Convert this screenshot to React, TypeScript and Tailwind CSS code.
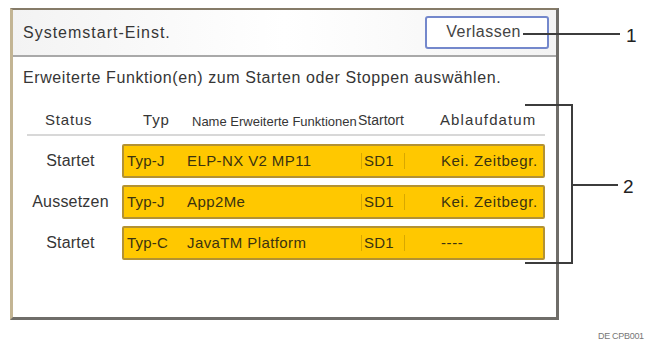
import React from 'react';

interface AppRow {
  status: string;
  typ: string;
  name: string;
  ort: string;
  datum: string;
}

const rows: AppRow[] = [
  { status: 'Startet', typ: 'Typ-J', name: 'ELP-NX V2 MP11', ort: 'SD1', datum: 'Kei. Zeitbegr.' },
  { status: 'Aussetzen', typ: 'Typ-J', name: 'App2Me', ort: 'SD1', datum: 'Kei. Zeitbegr.' },
  { status: 'Startet', typ: 'Typ-C', name: 'JavaTM Platform', ort: 'SD1', datum: '----' },
];

const font = { fontFamily: '"Liberation Sans", Arial, sans-serif' };

export default function App() {
  return (
    <div className="relative w-[646px] h-[349px] bg-white text-[#363636]" style={font}>
      <div className="pt-[8px] pl-[10px]">
        {/* panel */}
        <div className="w-[549px] h-[312px] flex flex-col bg-white border-t-2 border-t-[#857b68] border-l-[3px] border-l-[#c3b594] border-r-[3px] border-r-[#6f6d69] border-b-[3px] border-b-[#6f6d69]">
          <div className="h-[47px] flex items-center justify-between pl-[10px] pr-[7px] bg-gradient-to-r from-[#f3f3f3] via-white to-[#f3f3f3] border-b-2 border-b-[#a9a9a9]">
            <span className="text-[16px] tracking-[1px]">Systemstart-Einst.</span>
            <button className="w-[124px] h-[33px] mt-[-1px] rounded-[3px] border-2 border-[#7488cc] bg-white text-right pr-[26px] text-[16px] tracking-[0.5px] text-[#444]">
              Verlassen
            </button>
          </div>

          <div className="pl-[10px] pt-[9px] text-[16px] tracking-[0.6px]">
            Erweiterte Funktion(en) zum Starten oder Stoppen auswählen.
          </div>

          <div className="ml-[14px] mt-[20px] w-[518px]">
            <div className="flex items-end h-[26px] border-b-2 border-b-[#d8d8d8] text-[15px] tracking-[0.8px] pb-[3px]">
              <span className="w-[114px] pl-[18px]">Status</span>
              <span className="w-[51px] pl-[2px]">Typ</span>
              <span className="w-[166px] text-[13px] tracking-[0px]">Name Erweiterte Funktionen</span>
              <span className="w-[82px] text-[14px] tracking-[0px]">Startort</span>
              <span className="tracking-[1.1px]">Ablaufdatum</span>
            </div>

            <div className="flex flex-col gap-[7px] mt-[8px]">
              {rows.map((r, i) => (
                <div key={i} className="flex items-center h-[34px]">
                  <span className="w-[95px] pr-[8px] text-center text-[16px] tracking-[0.2px]">{r.status}</span>
                  <div className="flex-1 h-full flex items-center bg-[#ffc800] border-2 border-[#b39233] rounded-[2px] text-[15px] text-[#3a3310] tracking-[0.2px]">
                    <span className="w-[63px] pl-[3px]">{r.typ}</span>
                    <span className="w-[172px] tracking-[0.4px]">{r.name}</span>
                    <span className="w-[45px] pl-[2px] flex items-center">
                      <span className="w-px h-[16px] bg-[#d8a800] mr-[2px]" />
                      {r.ort}
                    </span>
                    <span className="flex-1 flex items-center tracking-[0.6px]">
                      <span className="w-px h-[16px] bg-[#d8a800] mr-[36px]" />
                      {r.datum}
                    </span>
                  </div>
                </div>
              ))}
            </div>
          </div>
        </div>
      </div>

      {/* callout 1 */}
      <div className="absolute left-[523px] top-[33px] w-[97px] h-[2px] bg-[#3c3c3c]" />
      <span className="absolute left-[626px] top-[22px] text-[19px] text-[#222]">1</span>

      {/* callout 2 bracket */}
      <div className="absolute left-[525px] top-[104px] w-[48px] h-[160px] border-t-2 border-r-2 border-b-2 border-[#3c3c3c]" />
      <div className="absolute left-[573px] top-[184px] w-[45px] h-[2px] bg-[#3c3c3c]" />
      <span className="absolute left-[623px] top-[173px] text-[19px] text-[#222]">2</span>

      <span className="absolute left-[598px] top-[330px] text-[9px] text-[#777] tracking-[-0.3px]">DE CPB001</span>
    </div>
  );
}
